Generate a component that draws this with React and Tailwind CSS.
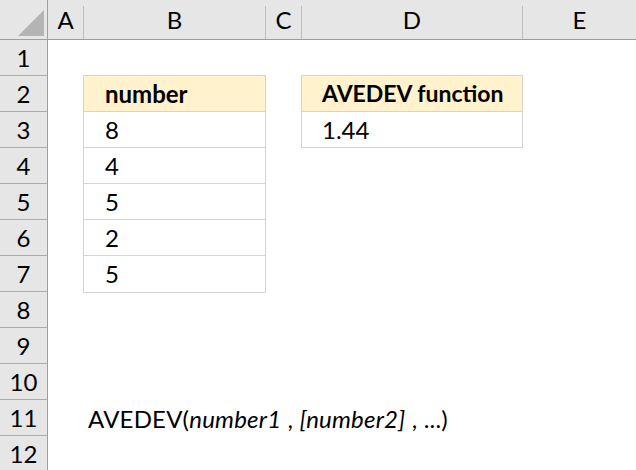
import React from "react";

const font = { fontFamily: "Lato, 'Open Sans', sans-serif" };

const columns = [
  { label: "A", w: "w-[36px]" },
  { label: "B", w: "w-[182px]" },
  { label: "C", w: "w-[36px]" },
  { label: "D", w: "w-[221px]" },
];

const numbers = ["8", "4", "5", "2", "5"];

function ColumnHeader() {
  return (
    <div className="flex h-[40px] border-b border-[#9e9e9e] bg-[#e6e6e6]">
      <div className="flex w-[48px] shrink-0 border-r border-[#9e9e9e]">
        <svg width="47" height="39" viewBox="0 0 47 39">
          <polygon points="18,36 44,36 44,10" fill="#b4b4b4" />
        </svg>
      </div>
      {columns.map((c) => (
        <div key={c.label} className={`flex shrink-0 ${c.w}`}>
          <div className="flex flex-1 items-center justify-center text-[24px] text-black">
            {c.label}
          </div>
          <div className="mt-[6px] w-px bg-[#bfbfbf]" />
        </div>
      ))}
      <div className="flex flex-1 items-center justify-center text-[24px] text-black">
        E
      </div>
    </div>
  );
}

function RowHeader() {
  return (
    <div className="w-[48px] shrink-0 border-r border-[#9e9e9e] bg-[#e6e6e6]">
      {Array.from({ length: 12 }, (_, i) => (
        <div
          key={i}
          className="flex h-[36px] items-center justify-center border-b border-[#ababab] text-[24px] text-black"
        >
          {i + 1}
        </div>
      ))}
    </div>
  );
}

export default function App() {
  return (
    <div className="h-[470px] w-[636px] overflow-hidden bg-white" style={font}>
      <ColumnHeader />
      <div className="flex">
        <RowHeader />
        <div className="flex flex-1 flex-col">
          <div className="h-[35px]" />
          <div className="flex items-start">
            <div className="w-[35px] shrink-0" />
            {/* B2:B7 */}
            <div className="w-[183px] shrink-0 border border-[#d4d4d4]">
              <div className="flex h-[36px] items-center border-b border-[#d4d4d4] bg-[#fff2cc] pl-[21px] text-[24px] font-bold text-black">
                number
              </div>
              {numbers.map((n, i) => (
                <div
                  key={i}
                  className={`flex h-[36px] items-center pl-[21px] text-[24px] text-black ${
                    i < numbers.length - 1 ? "border-b border-[#d4d4d4]" : ""
                  }`}
                >
                  {n}
                </div>
              ))}
            </div>
            <div className="w-[35px] shrink-0" />
            {/* D2:D3 */}
            <div className="w-[222px] shrink-0 border border-[#d4d4d4]">
              <div className="flex h-[36px] items-center border-b border-[#d4d4d4] bg-[#fff2cc] pl-[20px] text-[23px] font-bold text-black">
                AVEDEV function
              </div>
              <div className="flex h-[35px] items-center pl-[20px] text-[24px] text-black">
                1.44
              </div>
            </div>
          </div>
          <div className="h-[108px]" />
          <div className="flex h-[36px] items-center pl-[40px] text-[24px] tracking-[0.2px] text-black">
            AVEDEV(<i>number1</i>&nbsp;,&nbsp;<i>[number2]</i>&nbsp;, ...)
          </div>
        </div>
      </div>
    </div>
  );
}
